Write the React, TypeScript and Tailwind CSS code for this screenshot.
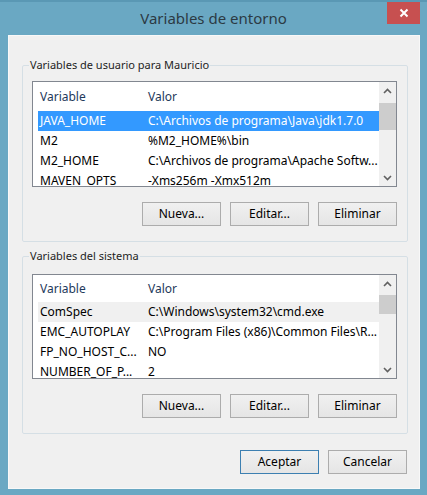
import React from "react";

type Row = { name: string; value: string };

const userVars: Row[] = [
  { name: "JAVA_HOME", value: "C:\\Archivos de programa\\Java\\jdk1.7.0" },
  { name: "M2", value: "%M2_HOME%\\bin" },
  { name: "M2_HOME", value: "C:\\Archivos de programa\\Apache Softw..." },
  { name: "MAVEN_OPTS", value: "-Xms256m -Xmx512m" },
];

const systemVars: Row[] = [
  { name: "ComSpec", value: "C:\\Windows\\system32\\cmd.exe" },
  { name: "EMC_AUTOPLAY", value: "C:\\Program Files (x86)\\Common Files\\R..." },
  { name: "FP_NO_HOST_C...", value: "NO" },
  { name: "NUMBER_OF_P...", value: "2" },
];

function Chevron({ down }: { down?: boolean }) {
  return (
    <svg width="9" height="6" viewBox="0 0 9 6" className="block">
      <path
        d={down ? "M1 1 L4.5 4.5 L8 1" : "M1 5 L4.5 1.5 L8 5"}
        fill="none"
        stroke="#606060"
        strokeWidth="1.6"
      />
    </svg>
  );
}

function ScrollBar({ thumbTop, thumbHeight }: { thumbTop: number; thumbHeight: number }) {
  return (
    <div className="flex w-[17px] shrink-0 flex-col bg-[#f0f0f0]">
      <div className="flex h-[17px] items-center justify-center">
        <Chevron />
      </div>
      <div className="flex flex-1 flex-col">
        <div style={{ height: thumbTop }} />
        <div className="bg-[#cdcdcd]" style={{ height: thumbHeight }} />
      </div>
      <div className="flex h-[17px] items-center justify-center">
        <Chevron down />
      </div>
    </div>
  );
}

function VarList({
  rows,
  selected,
  hovered,
  height,
  headerHeight,
  thumbTop,
  thumbHeight,
}: {
  rows: Row[];
  selected?: number;
  hovered?: number;
  height: number;
  headerHeight: number;
  thumbTop: number;
  thumbHeight: number;
}) {
  return (
    <div className="flex border border-[#828790] bg-white" style={{ height }}>
      <div className="min-w-0 flex-1 overflow-hidden">
        <div
          className="flex items-center pl-[7px] text-[#1e395b]"
          style={{ height: headerHeight }}
        >
          <span className="w-[108px]">Variable</span>
          <span>Valor</span>
        </div>
        {rows.map((r, i) => {
          const sel = i === selected;
          const hov = i === hovered;
          return (
            <div
              key={r.name}
              className={
                "ml-[5px] flex h-[20px] items-center whitespace-nowrap pl-[2px] " +
                (sel ? "bg-[#3399ff] text-white" : hov ? "bg-[#f0f0f0] text-black" : "text-black")
              }
            >
              <span className="w-[108px] shrink-0">{r.name}</span>
              <span>{r.value}</span>
            </div>
          );
        })}
      </div>
      <ScrollBar thumbTop={thumbTop} thumbHeight={thumbHeight} />
    </div>
  );
}

function Button({ label, primary }: { label: string; primary?: boolean }) {
  return (
    <button
      className={
        "h-[24px] w-[79px] border bg-gradient-to-b from-[#f0f0f0] to-[#e5e5e5] text-[12px] text-black " +
        (primary ? "border-[#3c7fb1]" : "border-[#acacac]")
      }
    >
      {label}
    </button>
  );
}

function Group({
  title,
  children,
  className,
}: {
  title: string;
  children: React.ReactNode;
  className?: string;
}) {
  return (
    <fieldset
      className={
        "ml-[13px] mr-[11px] rounded-[2px] border border-[#d5dfe5] pb-[15px] pl-[9px] pr-[10px] " +
        (className ?? "")
      }
    >
      <legend className="-ml-[3px] px-[1px] text-[11px] leading-[16px] text-[#1e1e1e]">
        {title}
      </legend>
      {children}
    </fieldset>
  );
}

export default function App() {
  return (
    <div
      className="flex h-[495px] w-[427px] flex-col bg-[#6aa8c3] text-[12px]"
      style={{ fontFamily: '"Noto Sans", "Open Sans", sans-serif' }}
    >
      {/* title bar */}
      <div className="relative flex h-[35px] shrink-0 items-center justify-center border-t-[2px] border-[#5a98b4]">
        <span className="text-[15px] text-[#2c3a43]">Variables de entorno</span>
        <div className="absolute right-[7px] top-0 flex h-[22px] w-[33px] items-center justify-center bg-[#c75050]">
          <svg width="10" height="10" viewBox="0 0 10 10">
            <path d="M1.5 1.5 L8.5 8.5 M8.5 1.5 L1.5 8.5" stroke="#fff" strokeWidth="2" />
          </svg>
        </div>
      </div>

      {/* client area */}
      <div className="mb-[6px] ml-[8px] mr-[7px] flex flex-1 flex-col border border-[#f8f8f8] bg-[#f0f0f0]">
        <Group title="Variables de usuario para Mauricio" className="mt-[21px]">
          <div className="mt-[8px]">
            <VarList
              rows={userVars}
              selected={0}
              height={106}
              headerHeight={29}
              thumbTop={4}
              thumbHeight={27}
            />
          </div>
          <div className="mt-[15px] flex justify-end gap-[9px]">
            <Button label="Nueva..." />
            <Button label="Editar..." />
            <Button label="Eliminar" />
          </div>
        </Group>

        <Group title="Variables del sistema" className="mt-[6px]">
          <div className="mt-[10px]">
            <VarList
              rows={systemVars}
              hovered={0}
              height={105}
              headerHeight={27}
              thumbTop={3}
              thumbHeight={19}
            />
          </div>
          <div className="mt-[15px] flex justify-end gap-[9px]">
            <Button label="Nueva..." />
            <Button label="Editar..." />
            <Button label="Eliminar" />
          </div>
        </Group>

        <div className="mr-[12px] mt-[16px] flex justify-end gap-[9px]">
          <Button label="Aceptar" primary />
          <Button label="Cancelar" />
        </div>
      </div>
    </div>
  );
}
